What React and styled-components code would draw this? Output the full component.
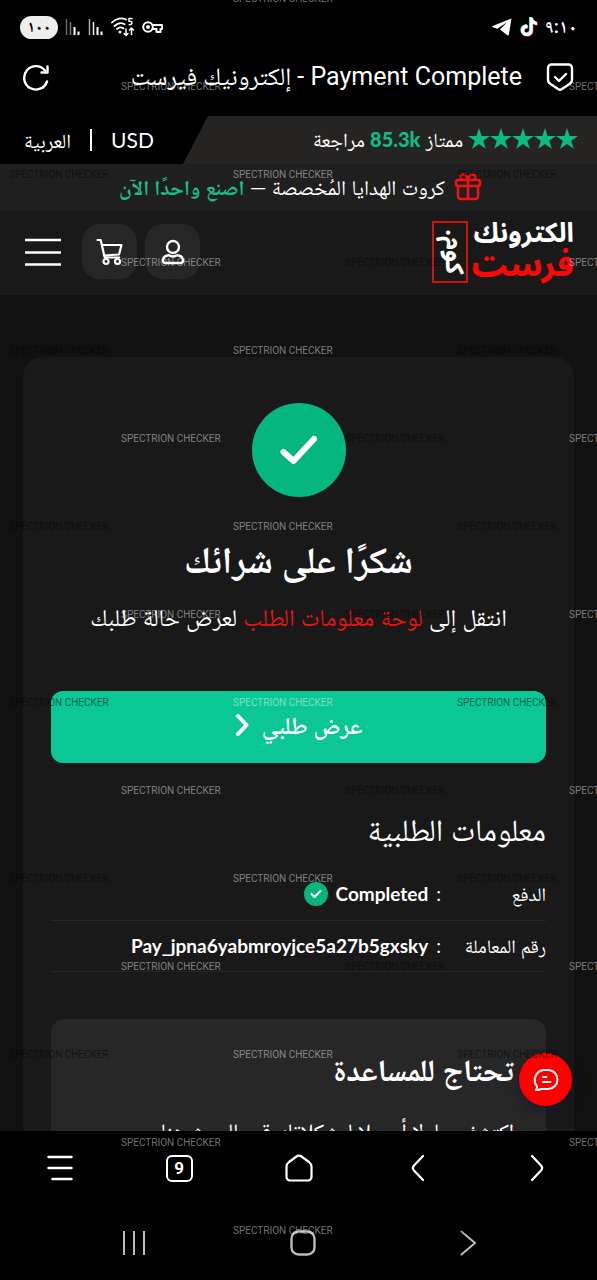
import React from "react";
import styled, { createGlobalStyle } from "styled-components";

const arabic = `Lato, "Noto Naskh Arabic", "DejaVu Sans", sans-serif`;
const system = `Roboto, "Noto Naskh Arabic", "DejaVu Sans", sans-serif`;

const GlobalStyle = createGlobalStyle`
  *,
  *::before,
  *::after {
    box-sizing: border-box;
  }

  body {
    margin: 0;
    background-color: #000;
    color: #fff;
    font-family: ${arabic};
  }

  button {
    border: 0;
    padding: 0;
    background: none;
    color: inherit;
    font: inherit;
    cursor: pointer;
  }

  a {
    color: inherit;
    text-decoration: none;
  }

  svg {
    display: block;
    flex-shrink: 0;
  }
`;

const Screen = styled.div`
  position: relative;
  display: flex;
  flex-direction: column;
  height: 100vh;
  overflow: hidden;
`;

const StatusBar = styled.div`
  display: flex;
  justify-content: space-between;
  align-items: center;
  height: 54px;
  padding: 0 20px;
  font-family: ${system};
`;

const StatusGroup = styled.div`
  display: flex;
  align-items: center;
  column-gap: 7px;
`;

const Clock = styled.span`
  font-size: 19px;
  font-weight: 600;
  line-height: 24px;
`;

const Battery = styled.span`
  display: flex;
  justify-content: center;
  align-items: center;
  width: 38px;
  height: 23px;
  border-radius: 12px;
  background-color: #eee;
  color: #000;
  font-size: 16px;
  font-weight: 700;
  line-height: 20px;
`;

const AddressBar = styled.div`
  display: flex;
  justify-content: space-between;
  align-items: center;
  column-gap: 24px;
  height: 62px;
  padding: 0 22px 16px;
  font-family: ${system};
`;

const PageTitle = styled.div`
  flex: 1;
  font-size: 25px;
  line-height: 40px;
  white-space: nowrap;
`;

const Site = styled.div`
  position: relative;
  flex: 1;
  min-height: 0;
  display: flex;
  flex-direction: column;
  overflow: hidden;
  background-color: #111;
`;

const TopBar = styled.div`
  display: flex;
  flex-shrink: 0;
  height: 48px;
  background-color: #000;
`;

const Reviews = styled.a`
  flex: 1;
  display: flex;
  align-items: center;
  column-gap: 5px;
  padding: 0 19px 2px;
  background-color: #252423;
  clip-path: polygon(25px 0, 100% 0, 100% 100%, 0 100%);
  font-size: 20px;
  line-height: 32px;
  white-space: nowrap;
`;

const Stars = styled.span`
  display: flex;
`;

const ReviewCount = styled.b`
  color: #10bd86;
  font-weight: 900;
`;

const Locale = styled.div`
  display: flex;
  align-items: center;
  column-gap: 19px;
  padding: 0 29px 0 24px;
  font-size: 20px;
  line-height: 32px;
`;

const Currency = styled.button`
  font-size: 21px;
`;

const Divider = styled.span`
  width: 2px;
  height: 22px;
  background-color: #fff;
`;

const GiftBar = styled.a`
  display: flex;
  flex-shrink: 0;
  justify-content: center;
  align-items: center;
  column-gap: 9px;
  height: 47px;
  padding: 0 0 2px 4px;
  background-color: #1f1f1f;
  font-size: 21px;
  line-height: 36px;
  white-space: nowrap;
`;

const GiftAction = styled.b`
  color: #1dbb88;
`;

const Header = styled.header`
  display: flex;
  flex-shrink: 0;
  justify-content: space-between;
  align-items: center;
  height: 84px;
  padding: 0 23px 3px 25px;
  background-color: #191919;
`;

const Logo = styled.a`
  display: flex;
  align-items: center;
  column-gap: 3px;
  font-family: "Noto Sans Arabic", "DejaVu Sans", sans-serif;
  font-weight: 700;
`;

const LogoWords = styled.span`
  display: flex;
  flex-direction: column;
`;

const LogoTop = styled.span`
  font-size: 27px;
  line-height: 28px;
`;

const LogoBottom = styled.span`
  color: #f80808;
  font-size: 33px;
  font-weight: 800;
  line-height: 36px;
`;

const LogoBox = styled.span`
  display: flex;
  justify-content: center;
  align-items: center;
  width: 36px;
  height: 62px;
  padding-left: 8px;
  border: 2px solid #d01414;
  font-size: 25px;
  line-height: 32px;
  writing-mode: vertical-rl;
`;

const HeaderActions = styled.div`
  display: flex;
  align-items: center;
  column-gap: 8px;
`;

const IconButton = styled.button`
  display: flex;
  justify-content: center;
  align-items: center;
  width: 55px;
  height: 55px;
  border-radius: 18px;
  background-color: #262626;
`;

const MenuButton = styled.button`
  margin-right: 13px;
`;

const Card = styled.main`
  flex-shrink: 0;
  margin: 62px 23px 0;
  padding: 46px 28px;
  border-radius: 20px;
  background-color: #191919;
`;

const Summary = styled.section`
  display: flex;
  flex-direction: column;
  align-items: center;
  text-align: center;
`;

const SuccessMark = styled.div`
  display: flex;
  justify-content: center;
  align-items: center;
  width: 94px;
  height: 94px;
  border-radius: 50%;
  background-color: #05b77e;
`;

const Heading = styled.h1`
  margin: 32px 0 0;
  font-size: 37px;
  font-weight: 700;
  line-height: 60px;
`;

const Lead = styled.p`
  margin: 8px 0 0;
  font-size: 24px;
  line-height: 40px;
  white-space: nowrap;
`;

const LeadLink = styled.a`
  color: #ea1313;
`;

const OrderButton = styled.button`
  display: flex;
  justify-content: center;
  align-items: center;
  column-gap: 13px;
  width: 100%;
  height: 72px;
  margin-top: 54px;
  padding-bottom: 4px;
  border-radius: 12px;
  background-color: #0bc796;
  font-size: 24px;
  font-weight: 600;
  line-height: 40px;
`;

const SectionTitle = styled.h2`
  margin: 42px 0 16px;
  font-size: 31px;
  font-weight: 400;
  line-height: 48px;
`;

const Details = styled.table`
  width: 100%;
  border-collapse: collapse;
`;

const DetailRow = styled.tr`
  height: 51px;
  border-bottom: 1px solid #262626;
`;

const DetailLabel = styled.th`
  width: 105px;
  padding: 0;
  font-size: 19px;
  font-weight: 400;
  line-height: 30px;
  text-align: start;
  white-space: nowrap;
`;

const DetailValue = styled.td`
  padding: 0;
  font-size: 19px;
  line-height: 30px;
`;

const ValueGroup = styled.div`
  display: flex;
  align-items: center;
  column-gap: 8px;
`;

const SmallMark = styled.span`
  display: flex;
  justify-content: center;
  align-items: center;
  width: 24px;
  height: 24px;
  border-radius: 50%;
  background-color: #0cb47d;
`;

const HelpBox = styled.section`
  margin-top: 47px;
  padding: 26px 32px;
  border-radius: 14px;
  background-color: #272727;
`;

const HelpTitle = styled.h2`
  margin: 0;
  font-size: 31px;
  font-weight: 700;
  line-height: 48px;
`;

const HelpText = styled.p`
  margin: 18px 0 0;
  font-size: 22px;
  line-height: 40px;
`;

const ChatButton = styled.button`
  position: absolute;
  right: 25px;
  bottom: 25px;
  display: flex;
  justify-content: center;
  align-items: center;
  width: 53px;
  height: 53px;
  border-radius: 50%;
  background-color: #fe0000;
  box-shadow: 0 4px 14px rgba(20, 20, 50, 0.7);
`;

const BrowserBar = styled.nav`
  display: grid;
  grid-template-columns: repeat(5, 1fr);
  justify-items: center;
  align-items: center;
  height: 74px;
`;

const TabCount = styled.button`
  display: flex;
  justify-content: center;
  align-items: center;
  width: 27px;
  height: 27px;
  border: 2px solid #fff;
  border-radius: 6px;
  font-family: ${system};
  font-size: 17px;
  font-weight: 700;
  line-height: 20px;
`;

const SystemNav = styled.nav`
  display: flex;
  justify-content: center;
  align-items: center;
  column-gap: 144px;
  height: 75px;
  color: #bbb;
`;

const Watermark = styled.div`
  position: absolute;
  inset: 0;
  overflow: hidden;
  direction: ltr;
  pointer-events: none;
  user-select: none;
  font-family: Roboto, sans-serif;
  font-size: 10px;
  line-height: 12px;
`;

const MarkRow = styled.div`
  display: grid;
  grid-template-columns: repeat(3, 224px);
  height: 88px;
  padding-left: ${(p) => (p.$shifted ? 121 : 9)}px;
`;

const MarkRows = styled.div`
  margin-top: -7px;
`;

const MarkText = styled.span`
  color: ${(p) => (p.$dark ? "rgba(0, 0, 0, 0.5)" : "rgba(255, 255, 255, 0.45)")};
`;

const Stroke = ({ w, h = w, width = 2, children, ...rest }) => (
  <svg
    width={w}
    height={h}
    viewBox={`0 0 ${w} ${h}`}
    fill="none"
    stroke="currentColor"
    strokeWidth={width}
    strokeLinecap="round"
    strokeLinejoin="round"
    aria-hidden="true"
    {...rest}
  >
    {children}
  </svg>
);

const Star = () => (
  <svg width="22" height="22" viewBox="0 0 22 22" fill="#0cbb82" aria-hidden="true">
    <path d="M11 0l2.6 7.9H22l-6.8 4.9 2.6 8L11 15.900l-6.800 4.900 2.600-8L0 7.900h8.400z" />
  </svg>
);

const Tiktok = () => {
  const note =
    "M10 1h3c.3 2.400 1.900 4 4.200 4.200v3.100c-1.600 0-3-.5-4.200-1.300v6.600c0 3.500-2.600 5.900-5.900 5.900S1.300 17 1.300 13.800c0-3.500 3-6 6.600-5.500v3.200c-1.800-.5-3.400.6-3.400 2.300 0 1.500 1.200 2.500 2.600 2.500 1.700 0 2.900-1.100 2.900-3z";
  return (
    <svg width="19" height="22" viewBox="0 0 19 22" aria-hidden="true">
      <path d={note} fill="#25e3dc" />
      <path d={note} fill="#f0406a" transform="translate(1.400 1.200)" />
      <path d={note} fill="#fff" transform="translate(.7 .6)" />
    </svg>
  );
};

const Signal = ({ weak }) => (
  <svg width="16" height="18" viewBox="0 0 16 18" aria-hidden="true">
    <path d="M1.500 1v16" stroke={weak ? "#666" : "#aaa"} strokeWidth="1.500" />
    <path d="M5.500 4v13" stroke={weak ? "#777" : "#eee"} strokeWidth="1.500" />
    <path d="M9.500 9v8" stroke="#fff" strokeWidth="2" />
    <path d="M13.500 13.500V17" stroke="#fff" strokeWidth="2" />
  </svg>
);

const App = () => {
  return (
    <Screen dir="rtl" lang="ar">
      <GlobalStyle />
      <StatusBar>
        <StatusGroup>
          <Clock>٩:١٠</Clock>
          <Tiktok />
          <svg width="20" height="18" viewBox="0 0 20 18" fill="#fff" aria-hidden="true">
            <path d="M19.500.5L.8 8.100c-.7.300-.7 1 0 1.200l4.600 1.500L15 4.200 8 11.600l7.300 5.600c.7.500 1.400.2 1.600-.7z" />
          </svg>
        </StatusGroup>
        <StatusGroup>
          <Stroke w={21} h={14}>
            <circle cx="6" cy="7" r="4.800" />
            <circle cx="6" cy="7" r="1" />
            <path d="M10.500 5H20v4h-1.500v3h-4V9h-4" />
          </Stroke>
          <Stroke w={24} h={20} width={1.8}>
            <path d="M1 5.500C5 1 11 .5 15 2.500M3.500 9c3-3 7-3.500 10-1.800M6 12c2-1.800 4.500-2 6.500-.5" />
            <circle cx="9" cy="15" r=".6" />
            <path d="M21 1.500h-3v2.800c3.500-.7 4.300 3.400.2 3.400" strokeWidth="1.500" />
            <path d="M15 12v6.500m-2-2l2 2 2-2M20.500 17.500V11m-2 2l2-2 2 2" strokeWidth="1.500" />
          </Stroke>
          <Signal />
          <Signal weak />
          <Battery>١٠٠</Battery>
        </StatusGroup>
      </StatusBar>

      <AddressBar>
        <Stroke w={29} h={30} width={2.4}>
          <path d="M5.500 2.500h17a3.500 3.500 0 0 1 3.500 3.500v12c0 2-1 3-2.500 4l-7.500 5c-1.500 1-2.500 1-4 0l-7.500-5C3 21 2 20 2 18V6a3.500 3.500 0 0 1 3.500-3.500z" />
          <path d="M9 15l4 4 7-7" />
        </Stroke>
        <PageTitle>Payment Complete - إلكترونيك فيرست</PageTitle>
        <button type="button" aria-label="تحديث">
          <Stroke w={28} width={2.4}>
            <path d="M25 18.500A11.700 11.700 0 1 1 23 7.500" />
            <path d="M25.500 3.500v6H19.500" />
          </Stroke>
        </button>
      </AddressBar>

      <Site>
        <TopBar>
          <Reviews href="#reviews">
            <Stars>
              <Star />
              <Star />
              <Star />
              <Star />
              <Star />
            </Stars>
            <span>
              ممتاز <ReviewCount>85.3k</ReviewCount> مراجعة
            </span>
          </Reviews>
          <Locale>
            <Currency type="button">USD</Currency>
            <Divider />
            <button type="button">العربية</button>
          </Locale>
        </TopBar>

        <GiftBar href="#gift-cards">
          <Stroke w={28} width={2.6} stroke="#f01212">
            <rect x="2" y="7" width="24" height="6" rx="2" />
            <path d="M4 13v10a3 3 0 0 0 3 3h14a3 3 0 0 0 3-3V13M14 7v19" />
            <path d="M14 7c-1-4-3-6-5.500-5.500S5.500 7 9 7M14 7c1-4 3-6 5.500-5.500S22.500 7 19 7" />
          </Stroke>
          <span>
            كروت الهدايا المُخصصة — <GiftAction>اصنع واحدًا الآن</GiftAction>
          </span>
        </GiftBar>

        <Header>
          <Logo href="#home">
            <LogoWords>
              <LogoTop>الكترونك</LogoTop>
              <LogoBottom>فرست</LogoBottom>
            </LogoWords>
            <LogoBox>كوم.</LogoBox>
          </Logo>
          <HeaderActions>
            <IconButton type="button" aria-label="حسابي">
              <Stroke w={24} h={26} width={2.4}>
                <circle cx="12" cy="8" r="6" />
                <path d="M6.500 16.500C8 15.500 9 17.500 12 17.500s4-2 5.500-1c2.500.5 4.500 2.500 4.500 5 0 1.500-1 2.500-2.500 2.500h-15C3 24 2 23 2 21.500c0-2.500 2-4.500 4.500-5z" />
              </Stroke>
            </IconButton>
            <IconButton type="button" aria-label="السلة">
              <Stroke w={28} h={28} width={2.2}>
                <path d="M1.500 2h3.200l4 17.500h14.500M6 7h19.500l-2.500 9.500-15 1" />
                <circle cx="10" cy="23.500" r="2.500" />
                <circle cx="21.500" cy="23.500" r="2.500" />
              </Stroke>
            </IconButton>
            <MenuButton type="button" aria-label="القائمة">
              <Stroke w={36} h={28} width={2.6} strokeLinecap="butt">
                <path d="M0 2h36M0 14.500h36M0 26.500h36" />
              </Stroke>
            </MenuButton>
          </HeaderActions>
        </Header>

        <Card>
          <Summary>
            <SuccessMark>
              <Stroke w={38} h={30} width={6}>
                <path d="M3.500 17l10 9L34 4" />
              </Stroke>
            </SuccessMark>
            <Heading>شكرًا على شرائك</Heading>
            <Lead>
              انتقل إلى <LeadLink href="#order">لوحة معلومات الطلب</LeadLink> لعرض حالة طلبك
            </Lead>
            <OrderButton type="button">
              عرض طلبي
              <Stroke w={14} h={24} width={4}>
                <path d="M3 3l8.500 9L3 21" />
              </Stroke>
            </OrderButton>
          </Summary>

          <SectionTitle>معلومات الطلبية</SectionTitle>
          <Details>
            <tbody>
              <DetailRow>
                <DetailLabel scope="row">الدفع</DetailLabel>
                <DetailValue>
                  <ValueGroup>
                    <span>:</span>
                    <b>Completed</b>
                    <SmallMark>
                      <Stroke w={12} h={10} width={2}>
                        <path d="M1.500 5l3 3 6-6" />
                      </Stroke>
                    </SmallMark>
                  </ValueGroup>
                </DetailValue>
              </DetailRow>
              <DetailRow>
                <DetailLabel scope="row">رقم المعاملة</DetailLabel>
                <DetailValue>
                  <ValueGroup>
                    <span>:</span>
                    <b>Pay_jpna6yabmroyjce5a27b5gxsky</b>
                  </ValueGroup>
                </DetailValue>
              </DetailRow>
            </tbody>
          </Details>

          <HelpBox>
            <HelpTitle>تحتاج للمساعدة</HelpTitle>
            <HelpText>اكتشف حلولا أو حلا لمشكلاتك قم بالبحث هنا</HelpText>
          </HelpBox>
        </Card>

        <ChatButton type="button" aria-label="الدردشة">
          <Stroke w={26} h={24} width={2}>
            <path d="M3 22c1-1.500 1.300-2.500.8-4A10 10 0 0 1 12 2h3a9.500 9.500 0 0 1 0 19H8.500c-1.500 0-3 1.500-5.500 1z" />
            <path d="M10 9h3.500M10 14h7.500" />
          </Stroke>
        </ChatButton>
      </Site>

      <BrowserBar>
        <button type="button" aria-label="التالي">
          <Stroke w={14} h={28} width={2.2}>
            <path d="M2 2l9 9.500c1.600 1.800 1.600 3.200 0 5L2 26" />
          </Stroke>
        </button>
        <button type="button" aria-label="السابق">
          <Stroke w={14} h={28} width={2.2}>
            <path d="M12 2l-9 9.500c-1.600 1.800-1.600 3.200 0 5L12 26" />
          </Stroke>
        </button>
        <button type="button" aria-label="الرئيسية">
          <Stroke w={28} width={2.2}>
            <path d="M4 8l7.500-5.500c1.800-1.300 3.200-1.300 5 0L24 8c1.500 1.200 2.500 2.500 2.500 4.500V23a3.500 3.500 0 0 1-3.500 3.500H5A3.500 3.500 0 0 1 1.500 23V12.500C1.500 10.500 2.500 9.200 4 8z" />
          </Stroke>
        </button>
        <TabCount type="button">9</TabCount>
        <button type="button" aria-label="خيارات">
          <Stroke w={26} width={2.4}>
            <path d="M1.500 2h23M1.500 13h23M5.500 24h19" />
          </Stroke>
        </button>
      </BrowserBar>

      <SystemNav>
        <button type="button" aria-label="رجوع">
          <Stroke w={16} h={26} width={2}>
            <path d="M1.500 1.500L15 13 1.500 24.500" />
          </Stroke>
        </button>
        <button type="button" aria-label="الشاشة الرئيسية">
          <Stroke w={26} width={2.4}>
            <rect x="1.500" y="1.500" width="23" height="23" rx="7" />
          </Stroke>
        </button>
        <button type="button" aria-label="التطبيقات الأخيرة">
          <Stroke w={24} h={24} width={2} strokeLinecap="butt">
            <path d="M2 0v24M12 0v24M22 0v24" />
          </Stroke>
        </button>
      </SystemNav>

      <Watermark aria-hidden="true">
        <MarkRows>
          {Array.from({ length: 15 }, (_, row) => {
            const shifted = row % 2 === 1;
            return (
              <MarkRow key={row} $shifted={shifted}>
                {[0, 1, 2].map((col) => (
                  <MarkText key={col} $dark={shifted === (col % 2 === 1)}>
                    SPECTRION CHECKER
                  </MarkText>
                ))}
              </MarkRow>
            );
          })}
        </MarkRows>
      </Watermark>
    </Screen>
  );
};

export default App;
